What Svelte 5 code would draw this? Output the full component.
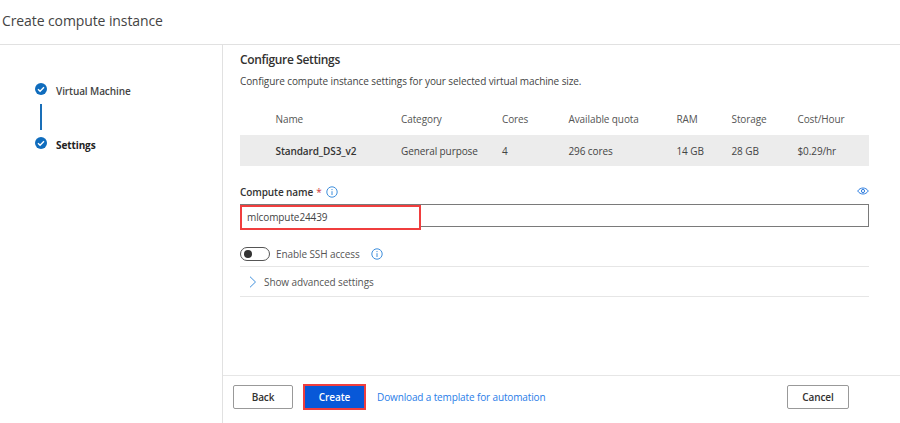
<script>
  const cols = ['Name', 'Category', 'Cores', 'Available quota', 'RAM', 'Storage', 'Cost/Hour'];
  const vals = ['Standard_DS3_v2', 'General purpose', '4', '296 cores', '14 GB', '28 GB', '$0.29/hr'];
</script>

{#snippet info()}
  <svg class="info" width="12" height="12" viewBox="0 0 12 12" fill="none">
    <circle cx="6" cy="6" r="5.2" stroke="#3f8fdc" stroke-width="1" />
    <path d="M6 5.2V9M6 3v1.1" stroke="#3f8fdc" stroke-width="1" />
  </svg>
{/snippet}

{#snippet check()}
  <svg width="12" height="12" viewBox="0 0 12 12" fill="none">
    <circle cx="6" cy="6" r="6" fill="#0f6cbd" />
    <path d="M3 6.2l2.1 2.1L9 4.2" stroke="#fff" stroke-width="1.4" />
  </svg>
{/snippet}

<div class="page">
  <header>Create compute instance</header>
  <div class="body">
    <aside>
      <div class="step">
        {@render check()}
        <span>Virtual Machine</span>
      </div>
      <div class="line"></div>
      <div class="step active">
        {@render check()}
        <span>Settings</span>
      </div>
    </aside>
    <main>
      <div class="content">
        <h2>Configure Settings</h2>
        <p class="desc">Configure compute instance settings for your selected virtual machine size.</p>
        <div class="grid head">
          {#each cols as c}<span>{c}</span>{/each}
        </div>
        <div class="grid row">
          {#each vals as v, i}<span class:bold={i === 0}>{v}</span>{/each}
        </div>
        <div class="label">
          <span class="lbl">Compute name</span><span class="star">*</span>
          {@render info()}
          <svg class="eye" width="12" height="8" viewBox="0 0 12 8" fill="none">
            <path d="M.7 4C2 2 4 1 6 1s4 1 5.300 3C10 6 8 7 6 7S2 6 .7 4z" stroke="#2f7ee0" stroke-width="1" />
            <circle cx="6" cy="4" r="1.600" stroke="#2f7ee0" stroke-width="1" />
          </svg>
        </div>
        <div class="input">
          <div class="highlight">mlcompute24439</div>
        </div>
        <div class="ssh">
          <div class="toggle"><i></i></div>
          <span>Enable SSH access</span>
          {@render info()}
        </div>
        <div class="advanced">
          <svg width="8" height="12" viewBox="0 0 8 12" fill="none">
            <path d="M1 .7L6.500 6 1 11.300" stroke="#3f8fdc" stroke-width="1" />
          </svg>
          <span>Show advanced settings</span>
        </div>
      </div>
      <footer>
        <button class="btn">Back</button>
        <button class="btn primary">Create</button>
        <span class="link">Download a template for automation</span>
        <button class="btn cancel">Cancel</button>
      </footer>
    </main>
  </div>
</div>

<style>
  :global(body) { margin: 0; background: #fff; }
  .page {
    width: 900px; height: 423px; overflow: hidden; display: flex; flex-direction: column;
    font-family: "Open Sans", "Noto Sans", sans-serif; font-size: 10px; color: #323130;
    letter-spacing: -0.1px;
  }
  header {
    height: 45px; box-sizing: border-box; border-bottom: 1px solid #e1e1e1;
    padding: 12px 0 0 2px; font-size: 14px; line-height: 18px; color: #444;
  }
  .body { flex: 1; display: flex; min-height: 0; }
  aside {
    width: 223px; box-sizing: border-box; border-right: 1px solid #e1e1e1;
    padding: 38px 0 0 35px;
  }
  .step { display: flex; align-items: flex-start; gap: 9px; height: 14px; font-weight: 600; color: #444; }
  .step span { line-height: 14px; margin-top: 1px; }
  .step.active { color: #222; font-weight: 700; }
  .line { width: 2px; height: 26px; background: #1a6fb8; margin: 7px 0 7px 5px; }
  main { flex: 1; display: flex; flex-direction: column; min-width: 0; }
  .content { flex: 1; padding: 6px 31px 0 17px; }
  h2 { margin: 0; font-size: 12px; line-height: 17px; font-weight: 600; color: #323130; letter-spacing: -0.35px; }
  .desc { margin: 6px 0 0; line-height: 14px; color: #444; }
  .grid {
    display: grid; grid-template-columns: 125.500px 101px 66.500px 108px 55px 66px 1fr;
    padding-left: 35.500px; align-items: center;
  }
  .head { height: 30px; box-sizing: border-box; padding-bottom: 2px; margin-top: 17px; color: #555; }
  .row { height: 31px; background: #ececec; color: #444; }
  .bold { font-weight: 600; color: #333; }
  .label { display: flex; align-items: center; height: 14px; margin-top: 19px; }
  .lbl { font-weight: 600; color: #333; }
  .star { color: #d13438; margin-left: 3px; }
  .info { margin-left: 4px; }
  .eye { margin-left: auto; margin-top: -3px; }
  .input {
    height: 23px; margin-top: 5px; box-sizing: border-box; border: 1px solid #7a7a7a; position: relative;
  }
  .highlight {
    position: absolute; left: -1px; top: 0; width: 181px; height: 25px; box-sizing: border-box;
    border: 2px solid #f03e3e; padding-left: 5px; line-height: 21px; color: #444; background: #fff;
  }
  .ssh { display: flex; align-items: center; height: 14px; margin-top: 20px; color: #555; }
  .ssh span { margin-left: 6px; }
  .ssh .info { margin-left: 11px; }
  .toggle {
    width: 30px; height: 14px; box-sizing: border-box; border: 1px solid #555; border-radius: 7px;
    display: flex; align-items: center; padding-left: 3px;
  }
  .toggle i { width: 8px; height: 8px; border-radius: 50%; background: #333; }
  .advanced {
    display: flex; align-items: center; gap: 7px; height: 29px; margin-top: 5px; padding-left: 9px;
    border-top: 1px solid #e6e6e6; border-bottom: 1px solid #e6e6e6; color: #555;
  }
  footer {
    height: 48px; flex: none; box-sizing: border-box; border-top: 1px solid #e6e6e6;
    display: flex; align-items: center; padding: 0 51px 5px 10px;
  }
  .btn {
    width: 60px; height: 24px; box-sizing: border-box; border: 1px solid #999; border-radius: 2px;
    background: #fff; font: 600 10px "Open Sans", sans-serif; color: #323130; padding: 0; letter-spacing: inherit;
  }
  .primary {
    width: 63px; height: 26px; margin-left: 10px; background: #0858d8; color: #fff;
    border: 2px solid #f03e3e; border-radius: 0;
  }
  .link { margin-left: 11px; color: #2a7de8; letter-spacing: -0.13px; }
  .cancel { width: 62px; margin-left: auto; }
</style>
